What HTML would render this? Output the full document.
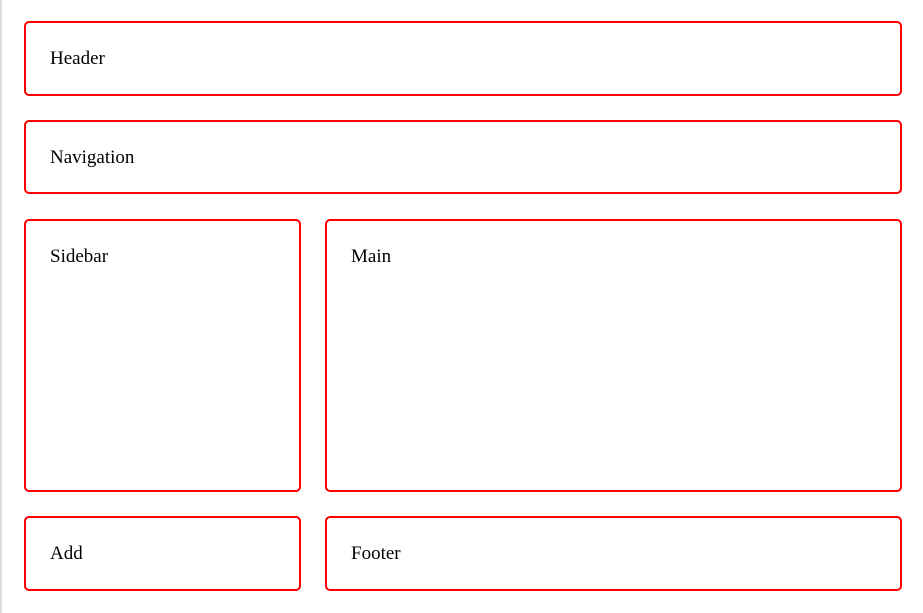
<!DOCTYPE html>
<html><head><style>
html,body{margin:0;padding:0;width:923px;height:613px;background:#fff;overflow:hidden}
body{position:relative}
.l{position:absolute;left:0;top:0;width:2px;height:613px;background:#ddd}
.b{position:absolute;box-sizing:border-box;border:2px solid #f00;border-radius:5px;font-family:"Liberation Serif",serif;font-size:19px;color:#000;padding:24px 0 0 24px;line-height:24px}
</style></head><body>
<div class="l"></div>
<div class="b" style="left:24px;top:21px;width:878px;height:75px">Header</div>
<div class="b" style="left:24px;top:120px;width:878px;height:74px">Navigation</div>
<div class="b" style="left:24px;top:219px;width:277px;height:273px">Sidebar</div>
<div class="b" style="left:325px;top:219px;width:577px;height:273px">Main</div>
<div class="b" style="left:24px;top:516px;width:277px;height:75px">Add</div>
<div class="b" style="left:325px;top:516px;width:577px;height:75px">Footer</div>
</body></html>
